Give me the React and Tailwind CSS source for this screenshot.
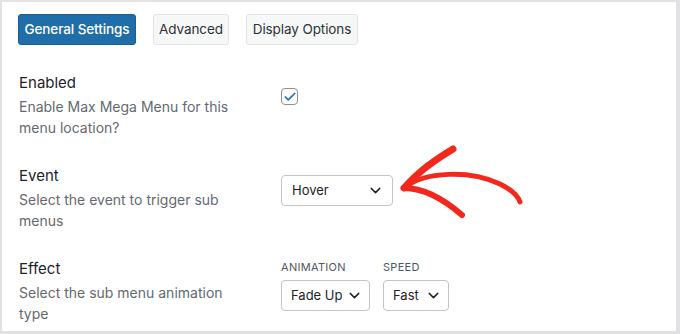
import { ChevronDown, Check } from "lucide-react"

const Select = ({ value, className }) => (
  <div className={`h-[31px] flex items-center justify-between border border-[#c3c4c7] rounded-[4px] bg-white pl-[10px] pr-[8px] text-[13px] text-[#1d2327] ${className}`}>
    <span>{value}</span>
    <ChevronDown size={17} strokeWidth={2} className="text-[#1d2327]" />
  </div>
)

const Row = ({ title, children, desc }) => (
  <div className="flex">
    <div className="w-[262px] shrink-0">
      <div className="text-[15px] leading-[20px] text-[#1d2327]">{title}</div>
      <p className="mt-[3px] w-[224px] text-[14px] leading-[21px] text-[#646970]">{desc}</p>
    </div>
    <div>{children}</div>
  </div>
)

export default function App() {
  return (
    <div className="w-[680px] h-[334px] bg-[#e2e2e4] pt-[2px] pl-[2px] pr-[4px] pb-[3px] overflow-hidden" style={{ fontFamily: "Inter, 'Liberation Sans', sans-serif" }}>
      <div className="relative h-full bg-white pl-[16px] pt-[12px]">
        <div className="flex gap-[17px] text-[13.5px] tracking-[-0.1px]">
          <button className="h-[31px] w-[118px] rounded-[3px] bg-[#1f6ea9] border border-[#195f94] text-white font-medium">General Settings</button>
          <button className="h-[31px] w-[76px] rounded-[3px] bg-[#f6f7f7] border border-[#e2e3e5] text-[#2c3338]">Advanced</button>
          <button className="h-[31px] w-[112px] rounded-[3px] bg-[#f6f7f7] border border-[#e2e3e5] text-[#2c3338]">Display Options</button>
        </div>

        <div className="mt-[28px] flex flex-col gap-[28px] pl-[1px]">
          <Row title="Enabled" desc="Enable Max Mega Menu for this menu location?">
            <div className="mt-[15px] w-[17px] h-[17px] rounded-[4px] border border-[#8c8f94] flex items-center justify-center">
              <Check size={14} strokeWidth={3} className="text-[#2271b1]" />
            </div>
          </Row>
          <Row title="Event" desc="Select the event to trigger sub menus">
            <Select value="Hover" className="mt-[9px] w-[112px]" />
          </Row>
          <Row title="Effect" desc="Select the sub menu animation type">
            <div className="flex gap-[13px]">
              <div>
                <div className="text-[11px] leading-[16px] tracking-[0.3px] text-[#50575e] mb-[5px]">ANIMATION</div>
                <Select value="Fade Up" className="w-[89px] !pl-[9px] !pr-[6px]" />
              </div>
              <div>
                <div className="text-[11px] leading-[16px] tracking-[0.3px] text-[#50575e] mb-[5px]">SPEED</div>
                <Select value="Fast" className="w-[66px] !pl-[9px] !pr-[6px]" />
              </div>
            </div>
          </Row>
        </div>

        <svg className="absolute left-0 top-0 pointer-events-none" width="676" height="330" viewBox="2 2 676 330">
          <g fill="none" stroke="#f3281c" strokeLinecap="round" strokeLinejoin="round">
            <path d="M404 188 C 425 171, 470 170, 500 184 C 512 190, 518 196, 520 202" strokeWidth="5" />
            <path d="M404 188 C 415 176, 425 166, 453 149" strokeWidth="7" />
            <path d="M404 188 C 420 188, 440 196, 462 215" strokeWidth="6" />
          </g>
        </svg>
      </div>
    </div>
  )
}
